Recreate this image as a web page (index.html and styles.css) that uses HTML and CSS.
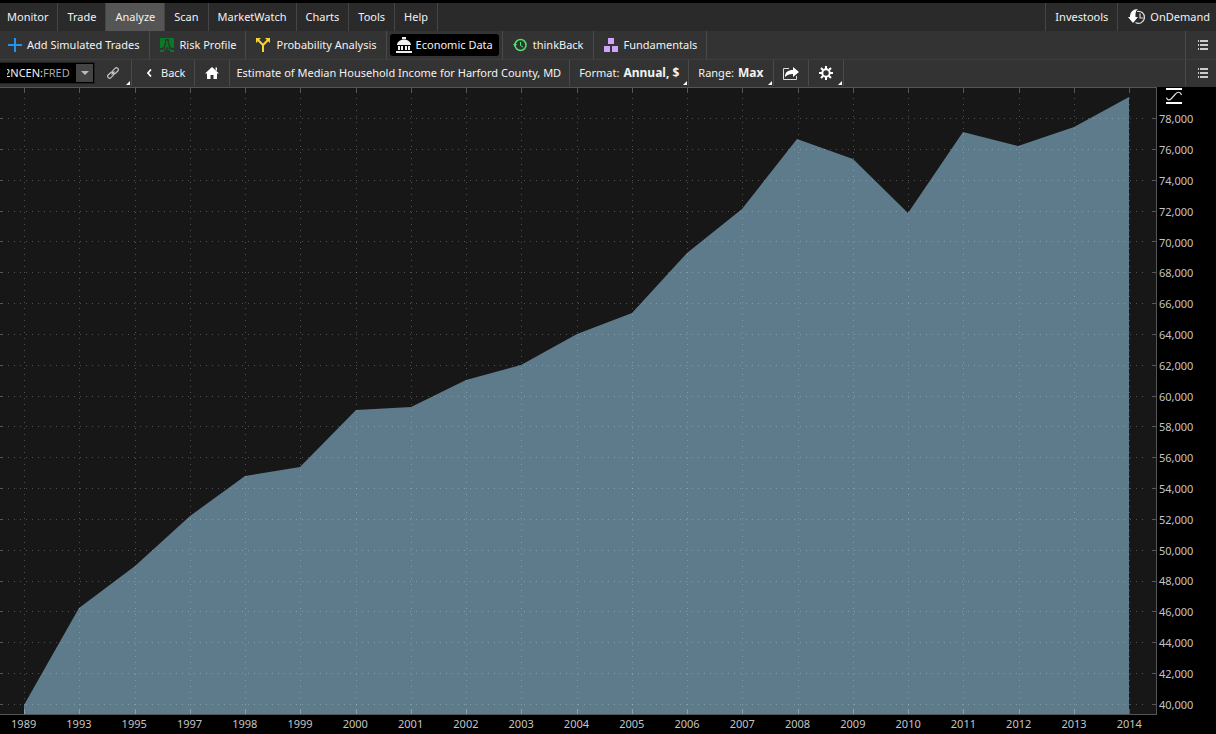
FILE: index.html
```html
<!DOCTYPE html>
<html lang="en">
<head>
<meta charset="utf-8">
<title>Analyze - Economic Data</title>
<link rel="stylesheet" href="styles.css">
</head>
<body>
<div class="app">
  <header class="header">
    <nav class="menu" aria-label="Main">
      <button class="tab">Monitor</button>
      <button class="tab">Trade</button>
      <button class="tab tab-active">Analyze</button>
      <button class="tab">Scan</button>
      <button class="tab">MarketWatch</button>
      <button class="tab">Charts</button>
      <button class="tab">Tools</button>
      <button class="tab">Help</button>
      <span class="spacer"></span>
      <button class="tab tab-right">Investools</button>
      <button class="tab tab-right tab-demand">
        <svg viewBox="0 0 18 16" width="18" height="16" aria-hidden="true">
          <path d="M9 2.500A6 6 0 1 1 7.500 13.500" fill="none" stroke="#ddd" stroke-width="1.200"/>
          <path d="M12 4.500v4.500h3.500" fill="none" stroke="#ddd" stroke-width="1.200"/>
          <path d="M10 0C5 0 2 3 2 8H0l5 6 5-6H7.500c0-4 0-6 2.500-8z" fill="#fff"/>
        </svg>OnDemand</button>
    </nav>
    <nav class="row" aria-label="Analyze tools">
      <button class="tool tool-add">
        <svg viewBox="0 0 14 14" width="14" height="14" aria-hidden="true"><path d="M7 0v14M0 7h14" stroke="#2492ee" stroke-width="2"/></svg>Add Simulated Trades</button>
      <button class="tool">
        <svg viewBox="0 0 14 14" width="14" height="14" aria-hidden="true"><path d="M0 0h5v3C5 6 4 9 2 10H0zM9 0h5v10h-2C10 9 9 6 9 3zM0 12h3v2H0zM11 12h3v2h-3z" fill="#087a25"/><path d="M5 .5h4M5 12c1-2 1.500-5 2-9 .5 4 1 7 2 9M3.500 11v2.500M10.500 11v2.500M5 8.500h4" stroke="#087a25" fill="none"/></svg>Risk Profile</button>
      <button class="tool">
        <svg viewBox="0 0 14 14" width="14" height="14" aria-hidden="true"><path d="M1.500 1.500L7 7l5.500-5.500M7 7v7" stroke="#f6d337" stroke-width="2" fill="none"/><path d="M0 0h5L0 5zM14 0H9l5 5z" fill="#f6d337"/></svg>Probability Analysis</button>
      <span class="tool-slot"><button class="tool-active" aria-pressed="true">
        <svg viewBox="0 0 16 16" width="16" height="16" aria-hidden="true"><path d="M6 0h4v2H6zM1 8c0-3 3-5.500 7-5.500S15 5 15 8zM2 9h2v4H2zM5 9h2v4H5zM9 9h2v4H9zM12 9h2v4h-2zM0 14h16v2H0z" fill="#eee"/></svg>Economic Data</button></span>
      <button class="tool">
        <svg viewBox="0 0 14 14" width="14" height="14" aria-hidden="true"><circle cx="7.500" cy="7" r="5.500" fill="none" stroke="#4fe36f" stroke-width="1.500"/><path d="M7.500 4v3.500L10 9" fill="none" stroke="#4fe36f"/><path d="M0 6h4L2 9z" fill="#4fe36f"/></svg>thinkBack</button>
      <button class="tool">
        <svg viewBox="0 0 14 14" width="14" height="14" aria-hidden="true"><path d="M4 0h6v6H4zM0 8h6v6H0zM8 8h6v6H8z" fill="#d0a4fa"/></svg>Fundamentals</button>
      <span class="spacer"></span>
      <button class="list-button" aria-label="Toolbar options">
        <svg viewBox="0 0 10 10" width="10" height="10" aria-hidden="true"><path d="M0 0h1v2H0zM2 0h8v2H2zM0 4h1v2H0zM2 4h8v2H2zM0 8h1v2H0zM2 8h8v2H2z" fill="#ccc"/></svg></button>
    </nav>
    <div class="row row-symbol">
      <div class="symbol">
        <span class="symbol-text">2NCEN:<span class="symbol-source">FRED</span></span>
        <button class="symbol-drop" aria-label="Choose symbol"><svg viewBox="0 0 8 4" width="8" height="4" aria-hidden="true"><path d="M0 0h8L4 4z" fill="#bbb"/></svg></button>
      </div>
      <button class="cell cell-link corner" aria-label="Link">
        <svg viewBox="0 0 12 12" width="12" height="12" aria-hidden="true"><g fill="none" stroke="#c4c4c4" stroke-width="1.200"><rect x="4.800" y="1.900" width="7" height="3.800" rx="1.900" transform="rotate(-45 8.300 3.800)"/><rect x=".2" y="6.300" width="7" height="3.800" rx="1.900" transform="rotate(-45 3.700 8.200)"/><path d="M4.500 7.500l3-3"/></g></svg></button>
      <button class="cell cell-back">
        <svg viewBox="0 0 5 8" width="5" height="8" aria-hidden="true"><path d="M4 0.500L1 4l3 3.500" fill="none" stroke="#fff" stroke-width="1.700"/></svg>Back</button>
      <button class="cell cell-icon" aria-label="Home">
        <svg viewBox="0 0 14 12" width="14" height="12" aria-hidden="true"><path d="M7 0l7 6.500h-2V12H8.500V8h-3v4H2V6.500H0zM10.500 0.500H12V4l-1.500-1.500z" fill="#fff"/></svg></button>
      <h1 class="cell cell-title">Estimate of Median Household Income for Harford County, MD</h1>
      <button class="cell cell-choice corner">Format: <b>Annual, $</b></button>
      <button class="cell cell-choice corner">Range: <b>Max</b></button>
      <button class="cell cell-icon" aria-label="Share">
        <svg viewBox="0 0 16 13" width="16" height="13" aria-hidden="true"><path d="M6 1.500H.5v11h13V9" fill="none" stroke="#ddd"/><path d="M2 10c0-5 3-7 8-7V0l6 5-6 5V7C6 7 4 8 2 10z" fill="#fff"/></svg></button>
      <button class="cell cell-icon corner" aria-label="Settings">
        <svg viewBox="0 0 14 14" width="14" height="14" aria-hidden="true"><circle cx="7" cy="7" r="3.700" fill="none" stroke="#fff" stroke-width="2"/><path d="M7 0v3M7 11v3M0 7h3M11 7h3M2 2l2 2M10 10l2 2M12 2l-2 2M4 10l-2 2" stroke="#fff" stroke-width="2"/></svg></button>
      <span class="spacer"></span>
      <button class="list-button" aria-label="Chart options">
        <svg viewBox="0 0 10 10" width="10" height="10" aria-hidden="true"><path d="M0 0h1v2H0zM2 0h8v2H2zM0 4h1v2H0zM2 4h8v2H2zM0 8h1v2H0zM2 8h8v2H2z" fill="#ccc"/></svg></button>
    </div>
  </header>
  <main class="chart">
    <div class="plot">
      <svg class="plot-drawing" viewBox="0 0 1156 626" preserveAspectRatio="none" role="img" aria-label="Median household income, 1989 to 2014">
        <path class="area" d="M24 626V617L79 520L135 478L190 428L245 388L300 379L356 322L411 319L466 292L521 277L577 246L632 225L687 165L742 121L797 51L853 71L908 125L963 44L1018 58L1074 39L1129 9V626z"/>
        <g id="grid"></g>
      </svg>
    </div>
    <div class="years" id="years"></div>
    <div class="scale">
      <svg class="scale-icon" viewBox="0 0 16 16" width="16" height="16" aria-hidden="true"><path d="M0 1h16M0 15h16" stroke="#fff" stroke-width="2"/><path d="M.5 9.500C1 12.500 3.500 12.500 5.500 10.500L9.500 6C11.500 3.500 14.500 3.500 15.500 7" fill="none" stroke="#ddd" stroke-width="1.200"/></svg>
      <div class="amounts" id="amounts"></div>
    </div>
  </main>
</div>
<script src="chart.js"></script>
</body>
</html>
```
FILE: styles.css
```css
* { box-sizing: border-box; }
body {
  margin: 0;
  background: #000;
  color: #f2f2f2;
  font: 11px/16px "Noto Sans", "Open Sans", sans-serif;
}
button {
  margin: 0;
  padding: 0;
  border: 0;
  background: none;
  color: inherit;
  font: inherit;
  white-space: nowrap;
}
svg { display: block; flex: none; }
.app {
  display: flex;
  flex-direction: column;
  height: 100vh;
  padding-top: 3px;
  overflow: hidden;
}
.menu { display: flex; height: 28px; background: #2a2a2a; }
.tab {
  display: flex;
  align-items: center;
  padding: 0 9px;
  border-right: 1px solid #454545;
}
.tab:first-child { padding-left: 7px; }
.tab-active { background: #555; }
.tab-right { border-right: 0; border-left: 1px solid #454545; }
.tab-demand { gap: 4px; padding: 0 6px 0 10px; }
.spacer { flex: 1; }
.row {
  display: flex;
  height: 28px;
  background: #333;
}
.tool, .tool-slot {
  display: flex;
  align-items: center;
  gap: 6px;
  padding: 0 9px 0 10px;
  border-right: 1px solid #4a4a4a;
}
.tool-add { gap: 5px; padding-left: 8px; }
.tool-slot { padding: 0 3px; }
.tool-active {
  display: flex;
  align-items: center;
  gap: 4px;
  height: 22px;
  padding: 0 6px;
  border-radius: 3px;
  background: #000;
}
.list-button {
  display: flex;
  align-items: center;
  justify-content: center;
  width: 31px;
  padding-left: 4px;
  border-left: 1px solid #4a4a4a;
}
.row-symbol { padding-bottom: 1px; border-top: 1px solid #3e3e3e; }
.symbol {
  display: flex;
  align-self: center;
  width: 95px;
  height: 22px;
  padding: 1px;
  border: 1px solid #222;
  border-left: 0;
  background: #000;
}
.symbol-text {
  flex: 1;
  margin-left: 6px;
  padding-top: 1px;
  overflow: hidden;
  text-indent: -3px;
  white-space: nowrap;
}
.symbol-source { color: #aaa; }
.symbol-drop {
  display: flex;
  align-items: center;
  justify-content: center;
  width: 17px;
  background: #444;
}
.cell {
  display: flex;
  align-items: center;
  justify-content: center;
  border-right: 1px solid #4a4a4a;
}
.cell-link { width: 37px; }
.cell-back { gap: 9px; padding: 0 9px 0 15px; }
.cell-icon { width: 35px; }
.cell-title { margin: 0; padding: 0 8px 0 6px; font: inherit; white-space: nowrap; }
.cell-choice { gap: 4px; padding: 0 9px; }
.cell-choice b { font-size: 12px; }
.corner { position: relative; }
.corner::after {
  content: "";
  position: absolute;
  right: 1px;
  bottom: 1px;
  border-left: 4px solid transparent;
  border-bottom: 4px solid #fff;
}
.chart {
  flex: 1;
  min-height: 0;
  display: grid;
  grid-template-columns: minmax(0, 1fr) 59px;
  grid-template-rows: minmax(0, 1fr) 19px;
}
.plot {
  min-height: 0;
  border: solid #555;
  border-width: 1px 1px 1px 0;
  background: #171717;
}
.plot-drawing { width: 100%; height: 100%; }
.area { fill: #5d7b8b; }
.grid-line { stroke: #fff; stroke-opacity: .25; stroke-dasharray: 1 5; shape-rendering: crispEdges; }
.tick { stroke: #fff; stroke-opacity: .28; shape-rendering: crispEdges; }
.years {
  display: flex;
  margin-left: -4px;
  color: #c4c4c4;
}
.year { flex: 1; min-width: 0; text-align: center; line-height: 18px; }
.scale {
  grid-column: 2;
  grid-row: 1 / 3;
  position: relative;
  min-height: 0;
  padding: 17px 0 14px 2px;
  color: #c4c4c4;
}
.scale-icon { position: absolute; top: 1px; left: 9px; }
.amounts { display: flex; flex-direction: column; height: 100%; }
.amount { flex: 1; display: flex; align-items: center; min-height: 0; }
```
FILE: chart.js
```js
const years = [1989, 1993, 1995, 1997, 1998, 1999, 2000, 2001, 2002, 2003, 2004,
  2005, 2006, 2007, 2008, 2009, 2010, 2011, 2012, 2013, 2014];
const width = 1156;
const height = 626;
const grid = document.getElementById("grid");

function addPath(d, className) {
  const path = document.createElementNS("http://www.w3.org/2000/svg", "path");
  path.setAttribute("d", d);
  path.setAttribute("class", className);
  grid.append(path);
}

function addLabel(parentId, className, text) {
  const label = document.createElement("span");
  label.className = className;
  label.textContent = text;
  document.getElementById(parentId).append(label);
}

years.forEach((year, i) => {
  const x = Math.round(24 + i * 55.25) + 0.5;
  addPath(`M${x} 10V${height - 5}`, "grid-line");
  addPath(`M${x} 0v5M${x} ${height - 5}v5`, "tick");
  addLabel("years", "year", year);
});

for (let i = 0; i < 20; i++) {
  const y = Math.round(30 + i * 30.84) + 0.5;
  addPath(`M8 ${y}H${width - 11}`, "grid-line");
  addPath(`M0 ${y}h3M${width - 4} ${y}h4`, "tick");
  addLabel("amounts", "amount", (78000 - i * 2000).toLocaleString("en-US"));
}
```
